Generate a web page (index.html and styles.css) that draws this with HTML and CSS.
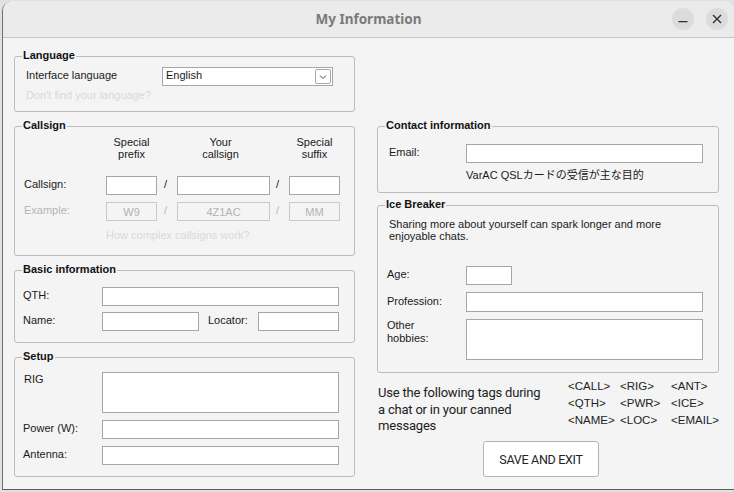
FILE: index.html
```html
<!DOCTYPE html>
<html>
<head>
<meta charset="utf-8">
<title>My Information</title>
<link rel="stylesheet" href="styles.css">
</head>
<body>
<div class="window">
  <div class="titlebar">
    <div></div>
    <div class="title">My Information</div>
    <div class="wbtns">
      <span class="wbtn"><svg width="22" height="22" viewBox="0 0 22 22"><path d="M6.5 13.7h9" stroke="#2f2f2f" stroke-width="1.3" fill="none"/></svg></span>
      <span class="wbtn"><svg width="22" height="22" viewBox="0 0 22 22"><path d="M7 7l8 8M15 7l-8 8" stroke="#2f2f2f" stroke-width="1.4" fill="none"/></svg></span>
    </div>
  </div>

  <div class="content">
    <div class="col col-left">
      <section class="group g-lang">
        <div class="gtitle">Language</div>
        <div class="lang-row">
          <span class="lbl lang-lbl">Interface language</span>
          <div class="combo">
            <span class="lbl">English</span>
            <span class="drop"><svg width="14" height="14" viewBox="0 0 14 14"><path d="M4 5.5l3 3 3-3" stroke="#444" stroke-width="1" fill="none"/></svg></span>
          </div>
        </div>
        <div class="hint lang-hint">Don't find your language?</div>
      </section>

      <section class="group g-call">
        <div class="gtitle">Callsign</div>
        <div class="cs">
          <div class="cs-row cs-head">
            <span></span>
            <span class="hd">Special<br>prefix</span>
            <span></span>
            <span class="hd hd-mid">Your<br>callsign</span>
            <span></span>
            <span class="hd">Special<br>suffix</span>
          </div>
          <div class="cs-row cs-inputs">
            <span class="lbl">Callsign:</span>
            <input class="inp" type="text">
            <span class="lbl slash">/</span>
            <input class="inp" type="text">
            <span class="lbl slash s2">/</span>
            <input class="inp" type="text">
          </div>
          <div class="cs-row cs-example">
            <span class="lbl">Example:</span>
            <input class="inp dis" type="text" value="W9" disabled>
            <span class="lbl slash">/</span>
            <input class="inp dis" type="text" value="4Z1AC" disabled>
            <span class="lbl slash s2">/</span>
            <input class="inp dis" type="text" value="MM" disabled>
          </div>
          <div class="hint cs-hint">How complex callsigns work?</div>
        </div>
      </section>

      <section class="group g-basic">
        <div class="gtitle">Basic information</div>
        <div class="basic">
          <div class="frow">
            <span class="lbl flbl">QTH:</span>
            <input class="inp w-qth" type="text">
          </div>
          <div class="frow r2">
            <span class="lbl flbl">Name:</span>
            <input class="inp w-name" type="text">
            <span class="lbl loc-lbl">Locator:</span>
            <input class="inp w-loc" type="text">
          </div>
        </div>
      </section>

      <section class="group g-setup">
        <div class="gtitle">Setup</div>
        <div class="setup">
          <div class="frow top">
            <span class="flbl rig-lbl">RIG</span>
            <textarea class="inp ta w-qth"></textarea>
          </div>
          <div class="frow r2">
            <span class="lbl flbl">Power (W):</span>
            <input class="inp w-qth" type="text">
          </div>
          <div class="frow r2">
            <span class="lbl flbl">Antenna:</span>
            <input class="inp w-qth" type="text">
          </div>
        </div>
      </section>
    </div>

    <div class="col col-right">
      <section class="group g-contact">
        <div class="gtitle">Contact information</div>
        <div class="contact">
          <div class="frow">
            <span class="lbl clbl">Email:</span>
            <input class="inp w-email" type="text">
          </div>
          <div class="jp">VarAC QSLカードの受信が主な目的</div>
        </div>
      </section>

      <section class="group g-ice">
        <div class="gtitle">Ice Breaker</div>
        <div class="ice-desc">Sharing more about yourself can spark longer and more<br>enjoyable chats.</div>
        <div class="ice">
          <div class="frow age">
            <span class="lbl ilbl">Age:</span>
            <input class="inp w-age" type="text">
          </div>
          <div class="frow r2">
            <span class="lbl ilbl">Profession:</span>
            <input class="inp w-email h20" type="text">
          </div>
          <div class="frow r2 top">
            <span class="ilbl hob-lbl">Other<br>hobbies:</span>
            <textarea class="inp ta w-email"></textarea>
          </div>
        </div>
      </section>

      <div class="tags">
        <div class="tags-text">Use the following tags during<br>a chat or in your canned<br>messages</div>
        <div class="tag-grid">
          <span>&lt;CALL&gt;</span><span>&lt;RIG&gt;</span><span>&lt;ANT&gt;</span>
          <span>&lt;QTH&gt;</span><span>&lt;PWR&gt;</span><span>&lt;ICE&gt;</span>
          <span>&lt;NAME&gt;</span><span>&lt;LOC&gt;</span><span>&lt;EMAIL&gt;</span>
        </div>
      </div>
      <button class="save">SAVE AND EXIT</button>
    </div>
  </div>
</div>
</body>
</html>
```
FILE: styles.css
```css
* { box-sizing: border-box; }

body {
  margin: 0;
  width: 734px;
  height: 492px;
  overflow: hidden;
  background: #dfe1e5;
  font-family: "Liberation Sans", Arial, sans-serif;
  font-size: 11px;
  color: #1a1a1a;
}

.window {
  margin: 1px 0 0 2px;
  width: 732px;
  height: 489px;
  background: #f4f4f4;
  border-left: 1px solid #707070;
  border-bottom: 1px solid #5a5a5a;
  border-radius: 10px 10px 0 0;
  overflow: hidden;
  display: flex;
  flex-direction: column;
}

.titlebar {
  flex: none;
  height: 37px;
  background: #ebebeb;
  border-bottom: 1px solid #c6c6c6;
  display: grid;
  grid-template-columns: 1fr auto 1fr;
  align-items: center;
}

.title {
  font-family: "Noto Sans", "Open Sans", sans-serif;
  font-weight: 700;
  font-size: 13.5px;
  color: #7a7a7a;
}

.wbtns {
  justify-self: end;
  display: flex;
  gap: 12px;
  padding-right: 6px;
}

.wbtn {
  width: 22px;
  height: 22px;
  border-radius: 50%;
  background: #dcdcdc;
  display: flex;
}

.content {
  display: flex;
  gap: 22px;
  padding: 18px 0 0 11px;
}

.col { display: flex; flex-direction: column; }
.col-left { width: 341px; gap: 14px; }
.col-right { width: 342px; padding-top: 70px; }

.group {
  border: 1px solid #bcbcbc;
  border-radius: 3px;
}

.gtitle {
  width: max-content;
  margin: -8px 0 0 7px;
  padding: 0 1px;
  line-height: 13px;
  font-weight: 700;
  color: #111;
  background: #f4f4f4;
}

.lbl { padding-bottom: 3px; }

.inp {
  display: block;
  margin: 0;
  padding: 0 3px;
  height: 19px;
  border: 1px solid #a6a6a6;
  border-radius: 0;
  background: #fff;
  font-family: "Liberation Sans", Arial, sans-serif;
  font-size: 11px;
  color: #1a1a1a;
  outline: none;
}

.ta { resize: none; height: 41px; }
.h20 { height: 20px; }

.hint { line-height: 13px; color: #d9d9d9; }

/* Language */
.g-lang { height: 56px; }
.lang-row {
  display: flex;
  align-items: center;
  margin: 5px 0 0 11px;
}
.lang-lbl { width: 136px; }
.combo {
  width: 171px;
  height: 19px;
  background: #fff;
  border: 1px solid #a6a6a6;
  display: flex;
  align-items: center;
  justify-content: space-between;
  padding: 0 1px 0 3px;
}
.drop {
  width: 16px;
  height: 15px;
  border: 1px solid #a9a9a9;
  border-radius: 2px;
  display: flex;
  align-items: center;
  justify-content: center;
}
.lang-hint { margin: 3px 0 0 11px; }

/* Callsign */
.g-call { height: 130px; }
.cs { padding: 4px 0 0 9px; }
.cs-row {
  display: grid;
  grid-template-columns: 82px 51px 20px 93px 19px 51px;
  align-items: center;
}
.cs-head { line-height: 12px; }
.hd { text-align: center; }
.hd-mid { padding-right: 6px; }
.cs-inputs { margin-top: 16px; }
.cs-inputs .inp { width: 100%; }
.cs-example { margin-top: 7px; color: #b4b4b4; }
.slash { padding-left: 7px; line-height: 13px; }
.slash.s2 { padding-left: 6px; }
.inp.dis {
  width: 100%;
  background: #f4f4f4;
  border-color: #c9c9c9;
  color: #b3b3b3;
  -webkit-text-fill-color: #b3b3b3;
  text-align: center;
  opacity: 1;
}
.cs-hint { margin: 8px 0 0 82px; }

/* Basic / setup rows */
.frow { display: flex; align-items: center; }
.frow.top { align-items: flex-start; }
.frow.r2 { margin-top: 7px; }
.flbl { width: 79px; }
.w-qth { width: 237px; }
.w-name { width: 97px; }
.loc-lbl { width: 50px; margin-left: 9px; }
.w-loc { width: 81px; }

.g-basic { height: 73px; }
.basic { padding: 11px 0 0 8px; }
.basic .frow.r2 { margin-top: 6px; }

.g-setup { height: 120px; }
.setup { padding: 9px 0 0 8px; }
.rig-lbl { padding: 1px 0 0 1px; line-height: 13px; }

/* Contact */
.g-contact { height: 67px; }
.contact { padding: 12px 0 0 11px; }
.clbl { width: 77px; }
.w-email { width: 237px; }
.jp {
  margin-top: 5px;
  padding-left: 77px;
  line-height: 15px;
  font-family: "Liberation Sans", "Noto Sans CJK JP", sans-serif;
  color: #1a1a1a;
}

/* Ice breaker */
.g-ice { height: 168px; margin-top: 12px; }
.ice-desc {
  margin-top: 7px;
  padding-left: 11px;
  line-height: 12px;
}
.ice { padding: 0 0 0 9px; }
.ice .age { margin-top: 24px; }
.ilbl { width: 79px; }
.w-age { width: 46px; }
.hob-lbl { padding-top: 0; line-height: 13px; }

/* Tags */
.tags {
  height: 62px;
  display: flex;
  align-items: flex-start;
}
.tags-text {
  width: 192px;
  margin-top: 12px;
  padding-left: 1px;
  font-family: Roboto, "Noto Sans", sans-serif;
  font-size: 13px;
  letter-spacing: -0.2px;
  line-height: 16.5px;
  color: #222;
}
.tag-grid {
  margin-top: 5px;
  display: grid;
  grid-template-columns: 52px 51px auto;
  line-height: 17px;
  font-size: 11.5px;
  color: #222;
}

.save {
  margin: 6px 0 0 106px;
  width: 116px;
  height: 36px;
  padding: 0;
  background: #fff;
  border: 1px solid #b4b4b4;
  border-radius: 3px;
  font-family: Roboto, "Noto Sans", sans-serif;
  font-size: 12.5px;
  letter-spacing: -0.3px;
  color: #222;
}
```
